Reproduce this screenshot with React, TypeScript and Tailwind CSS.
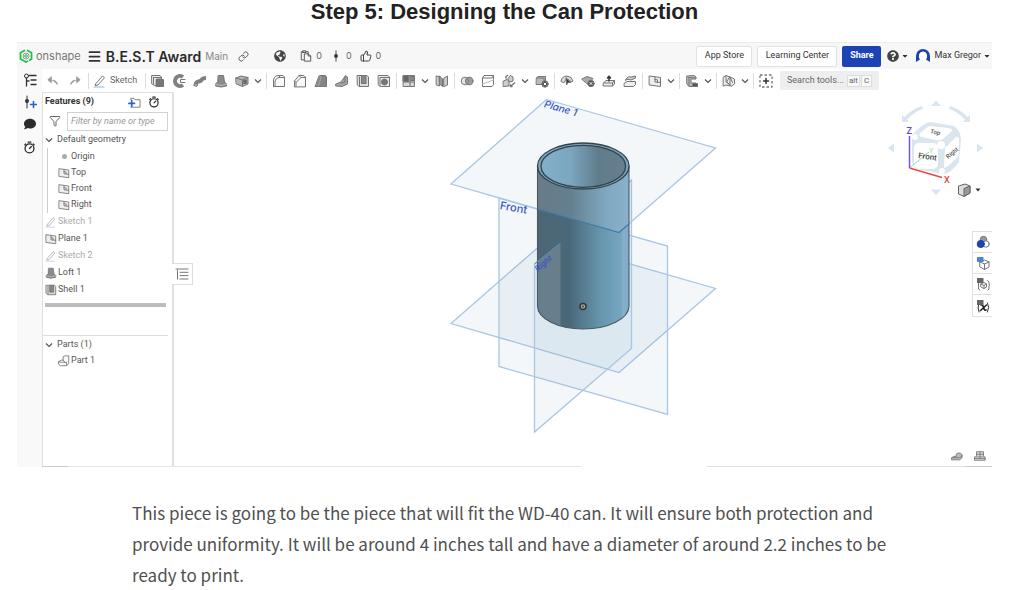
import type { ReactNode } from 'react';
import { Link, ThumbsUp, Funnel, Menu } from 'lucide-react';
import { FaGlobeAmericas, FaQuestionCircle, FaComment, FaCaretDown } from 'react-icons/fa';

interface IconProps {
  children: ReactNode;
  className?: string;
}

const Icon = ({ children, className = 'w-[14px] h-[14px]' }: IconProps) => (
  <svg
    viewBox="0 0 14 14"
    className={`shrink-0 ${className}`}
    fill="none"
    stroke="#757575"
    strokeWidth="1"
    strokeLinejoin="round"
    strokeLinecap="round"
    aria-hidden="true"
  >
    {children}
  </svg>
);

const Chevron = () => (
  <svg viewBox="0 0 8 8" className="w-2 h-2" fill="none" stroke="#555" strokeWidth="1.2" aria-hidden="true">
    <path d="M1 2.5 4 5.5 7 2.5" />
  </svg>
);

const PlaneIcon = ({ className }: { className?: string }) => (
  <Icon className={className}>
    <path d="M1.5 2 12.5 3.5V12.5L1.5 11Z" fill="#eee" />
    <path d="M7 3V8L12.5 8.5M7 5.5 9.5 5.8V8" />
  </Icon>
);

const PencilIcon = ({ className }: { className?: string }) => (
  <Icon className={className}>
    <path d="M3 9.5 9.5 2 11.5 3.7 5 11 2.5 11.5Z" stroke="#777" />
    <path d="M1 13H11" stroke="#8fb2ea" />
  </Icon>
);

const LoftIcon = ({ className }: { className?: string }) => (
  <Icon className={className}>
    <path d="M4.5 1.5H9.5L10.5 8 12.5 10V12L7 13 1.5 12V10L3.500 8Z" fill="#8c8c8c" />
    <path d="M1.5 10.5 7 11.5 12.5 10.5" stroke="#bbb" />
  </Icon>
);

const ShellIcon = ({ className }: { className?: string }) => (
  <Icon className={className}>
    <path d="M1.5 1.5H11L12.5 3V12.5H3L1.5 11Z" fill="#dcdcdc" />
    <path d="M5.500 2V9.5H10V2Z" fill="#888" />
    <path d="M3.500 3V12" />
  </Icon>
);

const StopwatchIcon = ({ className }: { className?: string }) => (
  <Icon className={className}>
    <circle cx="7" cy="8" r="4.8" stroke="#2b2b2b" strokeWidth="1.4" />
    <path d="M7 8 9 6M5.5 1.2H8.5M11 3.2 12 4.2M2.8 3.2 2 4.2" stroke="#2b2b2b" strokeWidth="1.4" />
  </Icon>
);

interface Tool {
  label: string;
  icon: ReactNode;
  menu?: boolean;
}

const toolGroups: Tool[][] = [
  [
    { label: 'Extrude', icon: <Icon><path d="M1 1.5H9L10.5 3V5H5.5V12L2.500 11 1 10Z" fill="#eee" /><path d="M2.500 3.500V10M2.500 3.500H10" /><rect x="5.5" y="5.5" width="7" height="7" fill="#777" /></Icon> },
    { label: 'Revolve', icon: <Icon><path d="M11 3A5 5 0 1 0 11 11" strokeWidth="4" stroke="#808080" strokeLinecap="butt" /><path d="M13 5.5H8.500V8.5H13" /></Icon> },
    { label: 'Sweep', icon: <Icon><path d="M2.5 12C2.500 6 6 8.5 8 6.5 9 5 9.5 4 13 4" strokeWidth="4" stroke="#808080" strokeLinecap="butt" /><circle cx="2.800" cy="10.800" r="1.6" fill="#bbb" /></Icon> },
    { label: 'Loft', icon: <LoftIcon /> },
    { label: 'Thicken', menu: true, icon: <Icon><path d="M1 4 6 2 13 3.5V10L7.5 12.5 1.5 10Z" fill="#b5b5b5" /><path d="M1 4 7.5 6V12.5M7.5 6 13 3.5" /><rect x="8.5" y="6" width="3" height="3.5" fill="#666" /></Icon> },
  ],
  [
    { label: 'Fillet', icon: <Icon><path d="M1.5 12.5V6Q2 1.5 7 1.5H11L12.5 3V12.5H3Z" fill="#fafafa" /><path d="M3 12.5V8Q3.500 3.5 8 3.5L7 1.500M8 3.500H12" /></Icon> },
    { label: 'Chamfer', icon: <Icon><path d="M1.5 12.5V7L6 1.5H11L12.5 3V12.5Z" fill="#fafafa" /><path d="M3 12.500V8.500L8 3.500H12M3 8.500 1.500 7M8 3.500 6 1.5" /></Icon> },
    { label: 'Draft', icon: <Icon><path d="M5.5 1.5H11.5L12.5 3V12.5H1.5Z" fill="#858585" /><path d="M5.500 1.500 7 3.500 4.500 12" stroke="#aaa" /></Icon> },
    { label: 'Rib', icon: <Icon><path d="M1 10 6 8 10.5 1.5 12.5 3V10L7 12.5 1 12Z" fill="#a5a5a5" /><path d="M6 9 10 8V3" /></Icon> },
    { label: 'Shell', icon: <ShellIcon /> },
    { label: 'Hole', icon: <Icon><path d="M1.500 1.500H11L12.5 3V12.5H3L1.500 11Z" fill="#eee" /><path d="M3 12V3.500H12" /><circle cx="7.500" cy="8" r="3" fill="#777" /></Icon> },
  ],
  [
    { label: 'Linear pattern', menu: true, icon: <Icon><rect x="1.5" y="1.5" width="11" height="11" fill="#d5d5d5" /><rect x="1.5" y="1.5" width="5" height="6" fill="#666" /><path d="M8 1.5V12.5M1.5 8H12.5" /><rect x="8.5" y="2.500" width="3.500" height="4" fill="#888" /></Icon> },
    { label: 'Mirror', icon: <Icon><path d="M1.5 2 4.500 3V12L1.5 11ZM9 4 12.5 2V11L9 12.5Z" fill="#ccc" /><path d="M4.500 2 7.500 5V12.500L4.500 10Z" fill="#999" /></Icon> },
  ],
  [
    { label: 'Boolean', icon: <Icon><circle cx="5" cy="7" r="3.8" fill="#e5e5e5" /><circle cx="9.2" cy="7" r="3.8" fill="#888" fillOpacity="0.8" /></Icon> },
    { label: 'Split', icon: <Icon><path d="M1.500 4 3 1.5H12.5V10.5L11 12.5H1.5V4H11L12.5 1.5" /><path d="M1.5 10 12.5 6" stroke="#bbb" /></Icon> },
    { label: 'Transform', menu: true, icon: <Icon><path d="M1.5 7 5 5.5 7 7V12L1.5 12.5ZM6 4.500 8.500 1.5 11 3V7L8 8Z" fill="#ccc" /><path d="M9 12 12.5 9M10 12.500H8.500V11M4 4V2.500L5.500 1.5" strokeWidth="1.5" /></Icon> },
    { label: 'Delete part', icon: <Icon><path d="M1.5 4 3 2.5H10.5V9L9 10.500H1.500Z" fill="#bbb" /><path d="M1.5 4H9V8" /><circle cx="10" cy="10" r="3.2" fill="#555" /><path d="M9 9 11 11M11 9 9 11" stroke="#fff" /></Icon> },
  ],
  [
    { label: 'Modify fillet', icon: <Icon><path d="M1 7Q2 2 7 2 12 2.5 13 7L11 8Q10 5.500 7 5.500 5 5.500 4 8.500Z" fill="#ddd" /><path d="M6 4 6.500 11 8 8.5 10.500 8.500Z" fill="#333" /></Icon> },
    { label: 'Delete face', icon: <Icon><path d="M1 5 6 2.500 12 4.500 7 10Z" fill="#aaa" /><circle cx="10" cy="9.5" r="3.2" fill="#555" /><path d="M9 8.500 11 10.5M11 8.5 9 10.5" stroke="#fff" /></Icon> },
    { label: 'Move face', icon: <Icon><path d="M1.5 9 4 6.500H12.5V10L10.5 12H1.5Z" fill="#eee" /><path d="M1.500 9H10.500L12.5 6.5M10.500 9V12" /><path d="M7 7V3M5.5 4 7 2.300 8.5 4" stroke="#333" strokeWidth="1.5" /></Icon> },
    { label: 'Replace face', icon: <Icon><path d="M1.5 9 4 7.500H12.5V10.500L10.5 12.5H1.5Z" fill="#eee" /><path d="M2.500 6Q5 1.5 8 3L12.500 2V4L8 6Q5 4.500 2.500 6Z" fill="#ccc" /></Icon> },
  ],
  [{ label: 'Plane', menu: true, icon: <PlaneIcon /> }],
  [{ label: 'Frame', menu: true, icon: <Icon><path d="M2 2 9 1.5 11 3V5H6V9H11L12 12.5H4L2 10Z" fill="#bbb" /><path d="M4 3.5V12M4 3.5 10.5 4" /><path d="M8 9.500H12.500V12.5H8Z" fill="#555" /></Icon> }],
  [{ label: 'Sheet metal', menu: true, icon: <Icon><path d="M1.5 3 4 1.5 8 3V12L4 11 1.5 12ZM8 3 12.5 5V10L9 12.5 5 8Z" fill="#eee" /><path d="M4 2V8L8 10.5M8 3 10.5 8.5" /></Icon> }],
  [{ label: 'Custom features', icon: <Icon><rect x="1" y="1" width="12" height="12" strokeDasharray="2.5 2" strokeWidth="1.3" strokeLinecap="butt" /><path d="M7 4.5V9.5M4.5 7H9.5" stroke="#333" strokeWidth="1.500" /></Icon> }],
];

const defaultGeometry = ['Top', 'Front', 'Right'];

const features = [
  { name: 'Sketch 1', icon: <PencilIcon className="w-3 h-3 opacity-60" />, hidden: true },
  { name: 'Plane 1', icon: <PlaneIcon className="w-3 h-3" />, hidden: false },
  { name: 'Sketch 2', icon: <PencilIcon className="w-3 h-3 opacity-60" />, hidden: true },
  { name: 'Loft 1', icon: <LoftIcon className="w-3 h-3" />, hidden: false },
  { name: 'Shell 1', icon: <ShellIcon className="w-3 h-3" />, hidden: false },
];

const Separator = () => <span className="w-px h-4 ml-0.5 mr-px bg-[#dcdcdc] shrink-0" />;

const TopBar = () => (
  <header className="flex items-center h-[27px] bg-[#f7f7f7] border-t border-[#ececec] text-[#333]">
    <svg viewBox="0 0 14 14" className="w-[14px] h-[14px] ml-0.5 shrink-0" fill="none" aria-hidden="true">
      <path d="M8 1.2 12.5 3.8V10L10 11.5" stroke="#1fc347" strokeWidth="1.8" />
      <path d="M6 1.2 1.5 3.8V10L7 13 9 12" stroke="#1fc347" strokeWidth="1.8" />
      <circle cx="7" cy="7" r="3" stroke="#8c9a90" strokeWidth="1" />
      <circle cx="7" cy="7" r="1.3" stroke="#1fb847" strokeWidth="1" />
    </svg>
    <span className="ml-[3px] text-[11px] text-[#777]">onshape</span>
    <button aria-label="Menu" className="ml-1.5">
      <Menu className="w-[15px] h-[15px]" strokeWidth={2.8} />
    </button>
    <h2 className="ml-1 text-[14px] font-semibold text-[#2b2b2b] whitespace-nowrap">B.E.S.T Award</h2>
    <span className="ml-1 text-[10px] text-[#888]">Main</span>
    <button aria-label="Copy link" className="ml-2.5">
      <Link className="w-[11px] h-[11px] text-[#555]" />
    </button>
    <FaGlobeAmericas className="ml-[25px] w-3 h-3 text-[#444]" />
    <span className="flex items-center gap-1 ml-[14px] text-[9px] text-[#666]">
      <Icon className="w-3 h-3">
        <path d="M4 11.5H1.5V2H3.5M3.5 1H7V3H3.5ZM7 2H9.5V4" stroke="#444" />
        <path d="M5.5 4.5H9.5L12.5 7V13H5.5ZM9.5 4.5V7H12.5" stroke="#444" />
      </Icon>
      0
    </span>
    <span className="flex items-center gap-1 ml-2 text-[9px] text-[#666]">
      <Icon className="w-3 h-3">
        <path d="M7 1V13" stroke="#333" />
        <circle cx="7" cy="7" r="2.2" fill="#333" stroke="none" />
      </Icon>
      0
    </span>
    <span className="flex items-center gap-1 ml-2 text-[9px] text-[#666]">
      <ThumbsUp className="w-3 h-3 text-[#444]" />
      0
    </span>
    <div className="flex items-center ml-auto font-[Roboto,sans-serif] text-[9px]">
      <button className="w-[56px] h-[21px] bg-white border border-[#e2e2e2] rounded-[2px] whitespace-nowrap">App Store</button>
      <button className="w-[80px] h-[21px] ml-[5px] bg-white border border-[#e2e2e2] rounded-[2px] whitespace-nowrap">Learning Center</button>
      <button className="w-[39px] h-[21px] ml-[5px] bg-[#1b43b3] text-white font-bold rounded-[2px]">Share</button>
      <button aria-label="Help" className="flex items-center ml-1.5">
        <FaQuestionCircle className="w-3 h-3 text-[#444]" />
        <FaCaretDown className="w-2 h-2 ml-0.5" />
      </button>
      <button className="flex items-center ml-1.5 whitespace-nowrap">
        <svg viewBox="0 0 16 16" className="w-4 h-4 mr-[3px]" aria-hidden="true">
          <path d="M1 14V8a7 7 0 0 1 14 0v6l-4-2.5A5 5 0 0 0 8 3.5 5 5 0 0 0 5 11.5Z" fill="#1b43b3" />
          <circle cx="8" cy="7.5" r="3.8" fill="#fff" />
        </svg>
        Max Gregor
        <FaCaretDown className="w-2 h-2 ml-0.5 mr-px" />
      </button>
    </div>
  </header>
);

const Toolbar = () => (
  <div className="flex items-center shrink-0 h-[23px] bg-white font-[Roboto,sans-serif]">
    <button aria-label="Undo" className="flex justify-center w-[22px]">
      <Icon className="w-3 h-3"><path d="M12 11Q12 6 5 6V9L1 5.5 5 2V5" fill="#999" stroke="#999" /></Icon>
    </button>
    <button aria-label="Redo" className="flex justify-center w-[22px]">
      <Icon className="w-3 h-3"><path d="M2 11Q2 6 9 6V9L13 5.5 9 2V5" fill="#999" stroke="#999" /></Icon>
    </button>
    <Separator />
    <button className="flex items-center gap-[3px] w-[53px] pl-[3px] text-[9px] text-[#666]">
      <PencilIcon />
      Sketch
    </button>
    <Separator />
    {toolGroups.map((group, i) => (
      <div key={group[0].label} className="flex items-center">
        {i > 0 && <Separator />}
        {group.map((tool) => (
          <button key={tool.label} aria-label={tool.label} className="flex items-center">
            <span className="flex justify-center w-[21px]">{tool.icon}</span>
            {tool.menu && (
              <span className="flex justify-center w-3">
                <Chevron />
              </span>
            )}
          </button>
        ))}
      </div>
    ))}
    <button className="flex items-center h-[19px] ml-1 px-[7px] bg-[#eee] rounded-[2px] text-[9px] text-[#666] whitespace-nowrap">
      Search tools...
      <kbd className="ml-[3px] px-px bg-[#f8f8f8] border border-[#ddd] text-[8px] leading-[10px] font-[Roboto]">alt</kbd>
      <kbd className="ml-px px-0.5 bg-[#f8f8f8] border border-[#ddd] text-[8px] leading-[10px] font-[Roboto]">C</kbd>
    </button>
  </div>
);

const FeaturePanel = () => (
  <aside className="relative w-[132px] shrink-0 bg-white border-t border-l border-r-2 border-[#e0e0e0] font-[Roboto,sans-serif] text-[9px] text-[#555]">
    <div className="flex items-center h-[18px] pl-0.5 pr-3">
      <h3 className="font-bold text-[#333]">Features (9)</h3>
      <button aria-label="Add folder" className="ml-auto">
        <Icon className="w-[13px] h-[13px]">
          <path d="M3 4V2.500H6.500L7.5 4H13V12H3" stroke="#777" />
          <path d="M4 5V11M1 8H7" stroke="#2563cf" strokeWidth="1.8" />
        </Icon>
      </button>
      <button aria-label="Show times" className="ml-[7px]">
        <StopwatchIcon className="w-3 h-3" />
      </button>
    </div>
    <div className="flex items-center h-5 pl-1.5">
      <Funnel className="w-3 h-3 text-[#555]" strokeWidth={1.8} />
      <input
        aria-label="Filter by name or type"
        placeholder="Filter by name or type"
        className="w-[101px] h-[19px] ml-1.5 px-[3px] border border-[#d2d2d2] text-[9px] italic placeholder:text-[#999] outline-none"
      />
    </div>
    <button className="flex items-center gap-1 h-[17px] pl-0.5">
      <Chevron />
      Default geometry
    </button>
    <ul className="ml-1 pl-2.5 border-l border-[#ccc]">
      <li className="flex items-center gap-px h-[17px]">
        <span className="flex justify-center w-3">
          <span className="w-[5px] h-[5px] rounded-full bg-[#aaa]" />
        </span>
        Origin
      </li>
      {defaultGeometry.map((name) => (
        <li key={name} className="flex items-center gap-px h-4">
          <PlaneIcon className="w-3 h-3" />
          {name}
        </li>
      ))}
    </ul>
    <ul className="pl-0.5">
      {features.map((feature) => (
        <li
          key={feature.name}
          className={`flex items-center gap-px h-[17px] ${feature.hidden ? 'text-[#aaa]' : ''}`}
        >
          {feature.icon}
          {feature.name}
        </li>
      ))}
    </ul>
    <div className="h-1 mt-[5px] ml-0.5 mr-1.5 bg-[#bdbdbd]" />
    <div className="mt-7 mr-1 border-t border-[#ddd]">
      <button className="flex items-center gap-1 h-[17px] pl-0.5">
        <Chevron />
        Parts (1)
      </button>
      <div className="flex items-center gap-px h-4 pl-[15px]">
        <Icon className="w-3 h-3">
          <path d="M1 7.5 4 6H6V2L8 1H12.5V10L10 12.5H3L1 11Z" fill="#fafafa" />
          <path d="M6 6 8 8.5H10V12M1 8 4 8.5H8" />
        </Icon>
        Part 1
      </div>
    </div>
    <button
      aria-label="Collapse feature list"
      className="absolute left-full top-[170px] flex items-center justify-center w-[21px] h-[22px] bg-white border border-l-0 border-[#ddd]"
    >
      <Icon>
        <path d="M1 2H13M5 5.3H13M5 8.6H13M5 12H13M2.5 3V12" stroke="#777" />
      </Icon>
    </button>
  </aside>
);

// Datum planes and the shelled cylinder, drawn in isometric view
const Model = () => (
  <svg viewBox="174 92 817 374" className="w-full h-full" role="img" aria-label="Can protection model">
    <defs>
      <linearGradient id="outer">
        <stop offset="0" stopColor="#4d6676" />
        <stop offset="0.35" stopColor="#4a6879" />
        <stop offset="0.7" stopColor="#6797af" />
        <stop offset="0.92" stopColor="#76a6c0" />
        <stop offset="0.93" stopColor="#86aeca" />
        <stop offset="1" stopColor="#83abc7" />
      </linearGradient>
      <linearGradient id="upper">
        <stop offset="0" stopColor="#687b89" />
        <stop offset="0.35" stopColor="#647f8e" />
        <stop offset="0.75" stopColor="#7fa8c0" />
        <stop offset="1" stopColor="#89b1cb" />
      </linearGradient>
      <linearGradient id="inner">
        <stop offset="0" stopColor="#85b0ca" />
        <stop offset="0.35" stopColor="#7ba6bf" />
        <stop offset="0.68" stopColor="#607c8b" />
        <stop offset="1" stopColor="#687f8e" />
      </linearGradient>
    </defs>
    <g fill="#5b8db8" fillOpacity="0.07" stroke="#a9c6e3" strokeWidth="1.3">
      <path d="M546 240 715 288.5 618.5 372.5 450.5 323.5Z" />
      <path d="M498.5 198 667 246V414.5L498.5 366.5Z" />
      <path d="M534 264 631 180V348.5L534 432Z" />
      <path d="M546 99.5 715 148 618.5 232.5 450.5 184Z" />
    </g>
    <path d="M537 166V306A45.75 23 0 0 0 628.5 306V166Z" fill="url(#outer)" />
    <path d="M537 166V209L618.5 232.5 628.5 224V166Z" fill="url(#upper)" />
    <path d="M537 261.5 560 243V326A45.75 23 0 0 1 537 306Z" fill="#687e8c" />
    <path d="M537 166V306A45.75 23 0 0 0 628.5 306V166" fill="none" stroke="#4a5a64" strokeWidth="1.1" />
    <path d="M537 209 618.5 232.5 628.5 224" fill="none" stroke="#447aa8" strokeWidth="1.2" />
    <path d="M534 264 560 243" stroke="#5f8db8" />
    <ellipse cx="582.8" cy="166" rx="45.8" ry="23" fill="#7ba4bc" stroke="#34444d" strokeWidth="1.3" />
    <ellipse cx="582.8" cy="166.3" rx="42.3" ry="21" fill="url(#inner)" stroke="#34444d" strokeWidth="1.3" />
    <circle cx="582.5" cy="306.5" r="3" fill="#aaa" stroke="#333" strokeWidth="1.5" />
    <circle cx="582.5" cy="306.5" r="1" fill="#444" />
    <g fill="#3555c4" fontFamily="Inter, sans-serif" fontWeight="500">
      <text x="543" y="107" fontSize="10" fontStyle="italic" transform="rotate(16 543 107)">Plane 1</text>
      <text x="499" y="209" fontSize="11" transform="rotate(10 499 209)">Front</text>
      <text x="537" y="272" fontSize="8" fontStyle="italic" transform="rotate(-40 537 272)">Right</text>
    </g>
  </svg>
);

const ViewCube = () => (
  <svg viewBox="885 95 100 105" className="absolute top-[3px] right-1.5 w-[100px] h-[105px]" role="img" aria-label="View cube">
    <g fill="#dbe5ee">
      <path d="M930 106 935 100.5 940 106ZM930 189.5 935 195 940 189.5ZM893 143.5V152.5L887 148ZM976 143.5V152.5L982 148Z" />
      <path d="M901 115V122H908L906 119.5Q913 112 922 109L921 106Q911 109 903.5 117Z" />
      <path d="M969 115V122H962L964 119.5Q957 112 948 109L949 106Q959 109 966.5 117Z" />
      <path d="M911 135Q922 123 929 122L953 126Q960 131 960 140L958 162Q950 173 943 174L916 169Q911 166 911 160Z" />
    </g>
    <g fill="#fff">
      <path d="M919 133 928 126 947 128Q953 129 950 132L942 139Q938 141 934 140L921 137Q917 136 919 133Z" />
      <rect x="913" y="143" width="24" height="26" rx="5" />
      <path d="M944 148 955 137Q958 136 958 140V154Q957 158 947 166L943 168Z" />
      <circle cx="940" cy="145" r="4" />
      <circle cx="914" cy="137" r="3" />
      <circle cx="941" cy="171" r="3" />
    </g>
    <path d="M908.5 168 928 152" stroke="#8fe3a0" />
    <path d="M908.5 168V136" stroke="#6a5be8" strokeWidth="1.5" />
    <path d="M908.5 168 941 177.5" stroke="#ef4444" strokeWidth="1.5" />
    <g fontFamily="Roboto, sans-serif" fontWeight="500">
      <text x="905.5" y="134" fontSize="9" fill="#5848dc">Z</text>
      <text x="943" y="183" fontSize="9" fill="#ef4444">X</text>
      <text x="928" y="153" fontSize="7" fill="#a6e8b2">Y</text>
      <text x="917" y="158" fontSize="8" fill="#444" transform="rotate(8 917 158)">Front</text>
      <text x="929" y="133" fontSize="6" fill="#555" transform="rotate(14 929 133)">Top</text>
      <text x="947" y="159" fontSize="6" fill="#555" transform="rotate(-40 947 159)">Right</text>
    </g>
    <path d="M957.5 186 964 184 969 186V193L963 196.5 957.5 194Z" fill="#ddd" stroke="#666" />
    <path d="M963 188.5 969 186V193L963 196.5Z" fill="#999" stroke="#666" />
    <path d="M974.5 188.5H979.5L977 191.5Z" fill="#333" />
  </svg>
);

const sideTabs: Tool[] = [
  {
    label: 'Appearances',
    icon: <Icon><circle cx="7.500" cy="4.5" r="3.2" fill="#999" /><circle cx="10" cy="9" r="3.2" fill="#fff" /><circle cx="4.8" cy="9" r="3.6" fill="#1b43b3" stroke="#1b43b3" /></Icon>,
  },
  {
    label: 'Configurations',
    icon: <Icon><path d="M4 6 8.5 4 13 6V11L8.5 13.5 4 11ZM4 6 8.5 8 13 6M8.5 8V13.5" fill="#fff" /><rect x="1" y="1" width="6.5" height="5" fill="#4f83d6" stroke="none" /></Icon>,
  },
  {
    label: 'Properties',
    icon: <Icon><path d="M5 7 8 5.5 10.500 7V10L8 11.5 5 10ZM5 7 8 8.500 10.500 7M8 8.500V11.500M2.5 6V12L4 13M11.5 3.5 13 5V7L13.5 8 13 9V12L12 13" /><rect x="1" y="1" width="6.5" height="5" fill="#666" stroke="none" /></Icon>,
  },
  {
    label: 'Variables',
    icon: <Icon><path d="M2.5 5Q1.5 9 3 13M11.5 4Q14 8 11.5 13" stroke="#333" /><path d="M5 6Q6.5 5 7.5 8.5T10 11M10.5 6 4.5 11.5" stroke="#222" strokeWidth="1.6" /><rect x="1" y="1" width="6.5" height="5" fill="#666" stroke="none" /></Icon>,
  },
];

const App = () => (
  <main className="min-h-screen overflow-hidden bg-white font-[Inter,sans-serif]">
    <h1 className="pl-[17px] pr-[43px] h-[42px] text-center font-['Liberation_Sans',Arial,sans-serif] text-[22px] leading-[24px] font-bold text-[#222]">
      Step 5: Designing the Can Protection
    </h1>
    <section className="ml-[17px] mr-[43px]">
      <TopBar />
      <div className="flex">
        <nav className="flex flex-col items-center w-[25px] shrink-0 bg-[#f9f9f9]">
          <button aria-label="Feature list" className="flex items-center h-[22px]">
            <Icon>
              <path d="M6.5 2.5H13M8 7H13M8 11.5H13M3.5 5V13M3.5 8H6" stroke="#333" strokeWidth="1.3" />
              <circle cx="3.5" cy="3" r="2" stroke="#333" />
            </Icon>
          </button>
          <button aria-label="Insert version" className="flex items-center h-[22px]">
            <Icon>
              <path d="M4 1V13" stroke="#333" />
              <circle cx="4" cy="6" r="2" fill="#333" stroke="none" />
              <path d="M10.5 6.5V12.5M7.5 9.5H13.5" stroke="#2563cf" strokeWidth="1.6" />
            </Icon>
          </button>
          <button aria-label="Comments" className="flex items-center h-[22px]">
            <FaComment className="w-3 h-3 text-[#2b2b2b]" />
          </button>
          <button aria-label="History" className="flex items-center h-6">
            <StopwatchIcon className="w-[13px] h-[13px]" />
          </button>
        </nav>
        <div className="flex flex-col flex-1 min-w-0">
          <Toolbar />
          <div className="flex h-[374px]">
            <FeaturePanel />
            <div className="relative flex-1 min-w-0">
              <Model />
              <ViewCube />
              <div className="absolute right-0 top-[139px] border border-r-0 border-[#e0e0e0] divide-y divide-[#e0e0e0] bg-white">
                {sideTabs.map((tab) => (
                  <button key={tab.label} aria-label={tab.label} className="flex items-center justify-center w-[19px] h-[21px]">
                    {tab.icon}
                  </button>
                ))}
              </div>
              <div className="absolute right-1.5 bottom-1 flex gap-[11px]">
                <button aria-label="Mass properties">
                  <Icon className="w-3 h-3"><path d="M1 9 3 7.500H6Q5 4.500 8 3.500 12 3 13 6V9L10 11.5H1Z" fill="#bbb" /><path d="M1 9H10L13 6.500" /></Icon>
                </button>
                <button aria-label="Measure">
                  <Icon className="w-3 h-3"><path d="M3 7V2H11V7M1 8H13V12H1ZM7 2V10M3 5H11M1 10H13" fill="#ddd" /></Icon>
                </button>
              </div>
            </div>
          </div>
          <div className="flex h-px">
            <span className="w-[26px] bg-[#ccc]" />
            <span className="flex-1 bg-[#e6e6e6]" />
            <span className="w-[126px]" />
            <span className="w-[258px] bg-[#e0e0e0]" />
            <span className="w-[27px] bg-[#ccc]" />
          </div>
        </div>
      </div>
    </section>
    <p className="max-w-[771px] mx-auto mt-[30px] font-['Noto_Sans_CJK_SC',sans-serif] text-[17px] leading-[31px] text-[#505050]">
      This piece is going to be the piece that will fit the WD-40 can. It will ensure both protection and
      provide uniformity. It will be around 4 inches tall and have a diameter of around 2.2 inches to be
      ready to print.
    </p>
  </main>
);

export default App;
